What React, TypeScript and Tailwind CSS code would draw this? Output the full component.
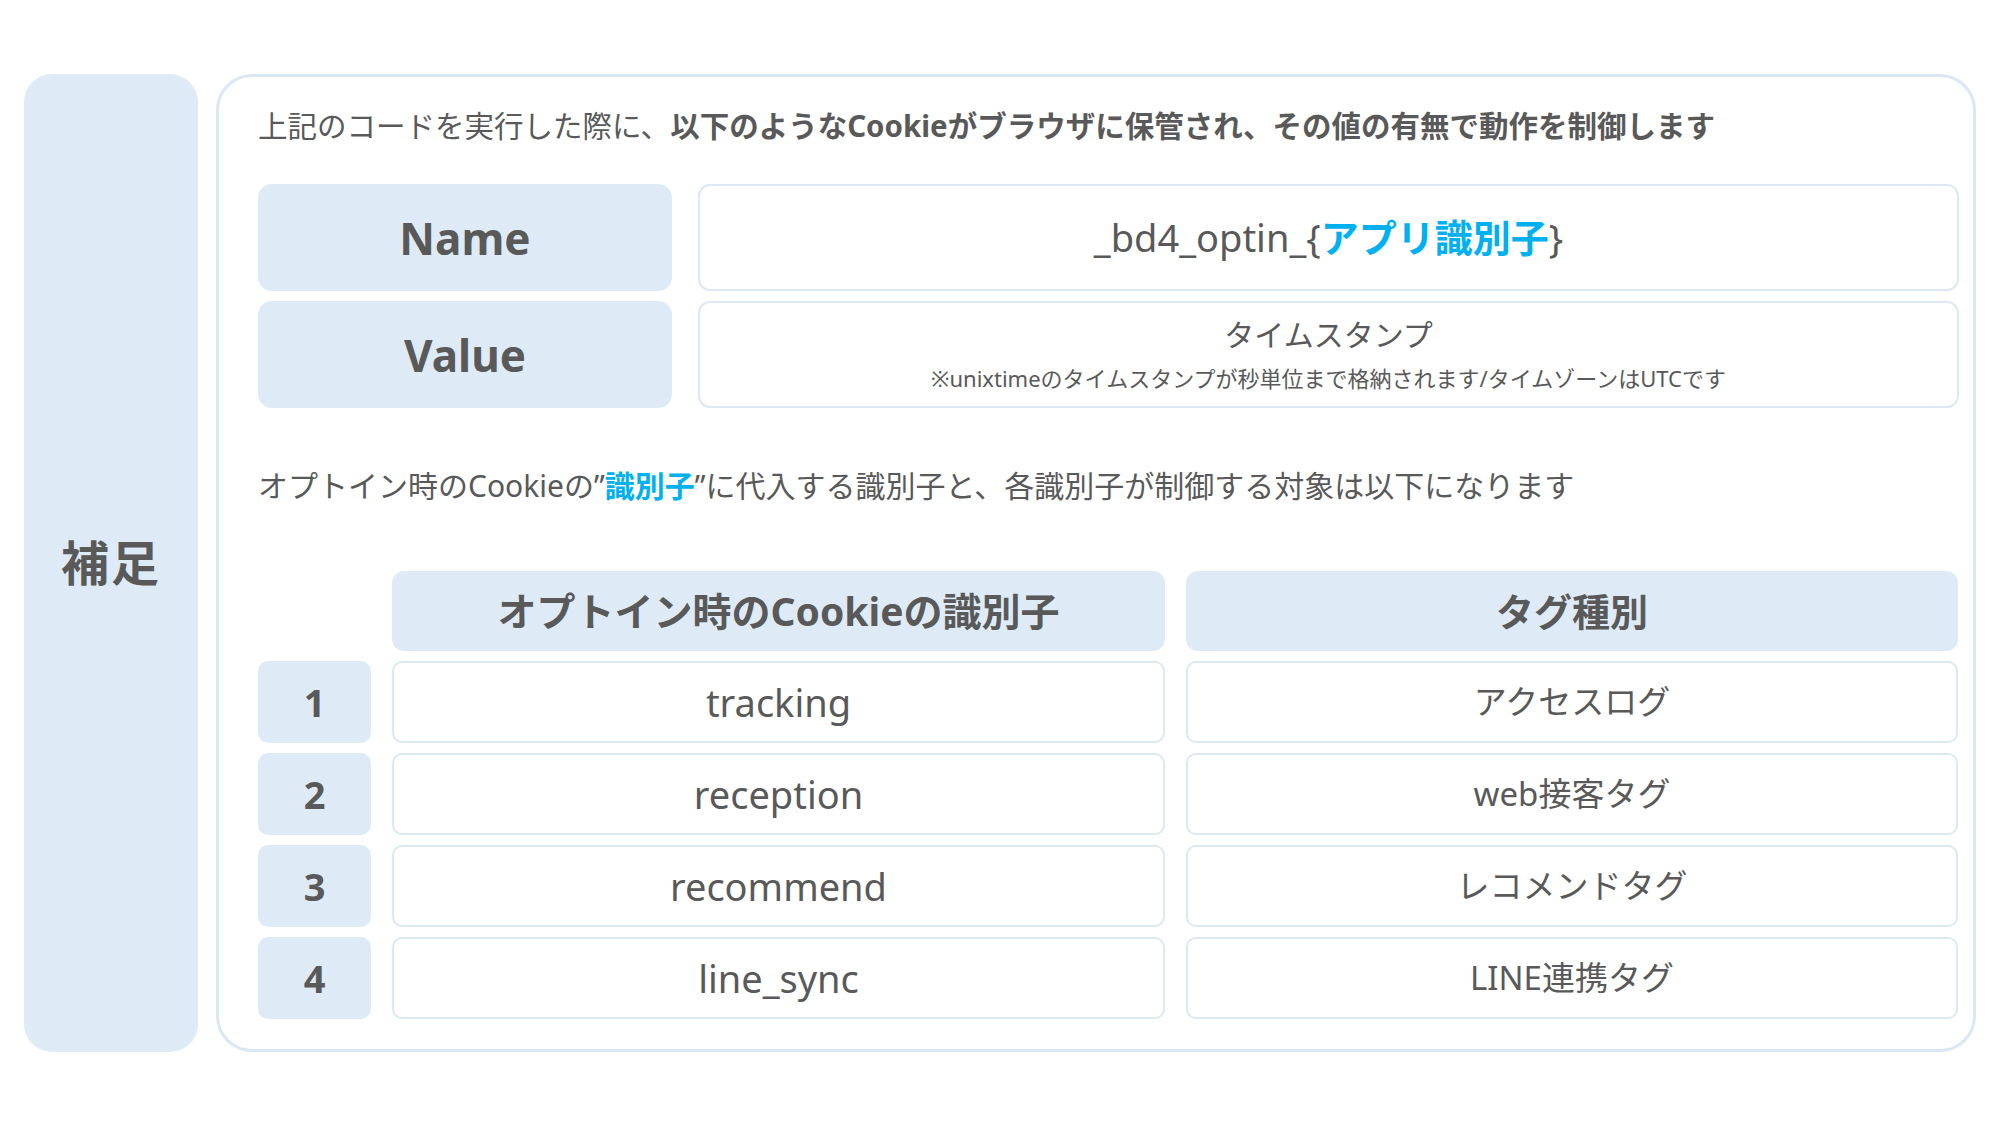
const rows = [
  { no: "1", id: "tracking", tag: "アクセスログ" },
  { no: "2", id: "reception", tag: "web接客タグ" },
  { no: "3", id: "recommend", tag: "レコメンドタグ" },
  { no: "4", id: "line_sync", tag: "LINE連携タグ" },
];

export default function App() {
  return (
    <div className="h-[1125px] w-[2000px] bg-white font-['Noto_Sans','Noto_Sans_CJK_JP',sans-serif] text-[#595959]">
      <div className="flex gap-[18px] pl-[24px] pt-[74px]">
        {/* Side label */}
        <div className="flex h-[978px] w-[174px] items-center justify-center rounded-[28px] bg-[#DEEBF7]">
          <span className="text-[48px] font-bold leading-none tracking-[2px]">補足</span>
        </div>

        {/* Main panel */}
        <div className="h-[978px] w-[1760px] rounded-[36px] border-[3px] border-[#DAE8F5] pl-[39px] pr-[14px] pt-[29px]">
          <p className="text-[29.5px] leading-[40px]">
            上記のコードを実行した際に、
            <span className="font-bold">以下のようなCookieがブラウザに保管され、その値の有無で動作を制御します</span>
          </p>

          <div className="mt-[38px] grid grid-cols-[414px_1fr] gap-x-[26px] gap-y-[10px]">
            <div className="flex h-[107px] items-center justify-center rounded-[14px] bg-[#DEEBF7]">
              <span className="text-[44px] font-bold">Name</span>
            </div>
            <div className="flex h-[107px] items-center justify-center rounded-[12px] border-2 border-[#DCE8F5]">
              <span className="text-[38px]">
                _bd4_optin_{"{"}
                <span className="font-bold text-[#00B0F0]">アプリ識別子</span>
                {"}"}
              </span>
            </div>
            <div className="flex h-[107px] items-center justify-center rounded-[14px] bg-[#DEEBF7]">
              <span className="text-[44px] font-bold">Value</span>
            </div>
            <div className="flex h-[107px] flex-col items-center justify-center rounded-[12px] border-2 border-[#DCE8F5]">
              <span className="-mt-[4px] text-[30px] leading-[42px]">タイムスタンプ</span>
              <span className="mt-[8px] text-[22px] leading-[28px]">
                ※unixtimeのタイムスタンプが秒単位まで格納されます/タイムゾーンはUTCです
              </span>
            </div>
          </div>

          <p className="mt-[58px] text-[30px] leading-[40px]">
            オプトイン時のCookieの”<span className="font-bold text-[#00B0F0]">識別子</span>
            ”に代入する識別子と、各識別子が制御する対象は以下になります
          </p>

          <div className="mt-[65px] grid grid-cols-[113px_773px_772px] gap-x-[21px] gap-y-[10px]">
            <div />
            <div className="flex h-[80px] items-center justify-center rounded-[12px] bg-[#DEEBF7]">
              <span className="text-[39px] font-bold">オプトイン時のCookieの識別子</span>
            </div>
            <div className="flex h-[80px] items-center justify-center rounded-[12px] bg-[#DEEBF7]">
              <span className="text-[38px] font-bold">タグ種別</span>
            </div>
            {rows.map((r) => (
              <div key={r.no} className="contents">
                <div className="flex h-[82px] items-center justify-center rounded-[10px] bg-[#DEEBF7]">
                  <span className="text-[38px] font-bold">{r.no}</span>
                </div>
                <div className="flex h-[82px] items-center justify-center rounded-[10px] border-2 border-[#DCE8F5]">
                  <span className="text-[38px]">{r.id}</span>
                </div>
                <div className="flex h-[82px] items-center justify-center rounded-[10px] border-2 border-[#DCE8F5]">
                  <span className="text-[33px]">{r.tag}</span>
                </div>
              </div>
            ))}
          </div>
        </div>
      </div>
    </div>
  );
}
